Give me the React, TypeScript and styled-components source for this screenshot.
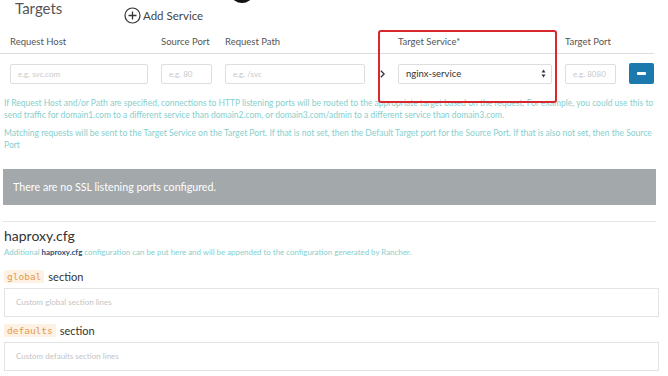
import styled, { createGlobalStyle } from 'styled-components'

const GlobalStyle = createGlobalStyle`
  html, body {
    margin: 0;
    padding: 0;
    background: #fff;
    font-family: Lato, 'Open Sans', sans-serif;
    color: #444;
  }
`

const Page = styled.div`
  position: relative;
  width: 668px;
  height: 376px;
  overflow: hidden;
`

const Blob = styled.div`
  position: absolute;
  left: 232px;
  top: -12px;
  width: 20px;
  height: 15px;
  border-radius: 50%;
  background: #111;
`

const TopBar = styled.div`
  display: flex;
  align-items: flex-start;
  height: 30px;
`

const SectionTitle = styled.div`
  font-size: 15px;
  color: #555;
  padding: 0 0 0 15px;
  line-height: 16px;
  width: 109px;
`

const AddService = styled.div`
  display: flex;
  align-items: center;
  gap: 2px;
  margin-top: 7px;
  font-size: 11.5px;
  color: #444;
`

const Table = styled.div`
  position: relative;
  display: grid;
  grid-template-columns: 138px 51px 140px 7px 154px 51px 25px;
  column-gap: 13px;
  padding: 0 14px 0 10px;
  align-items: center;
`

const HeadCell = styled.div`
  font-size: 9.5px;
  color: #555;
  height: 23px;
  line-height: 24px;
  white-space: nowrap;
`

const HeadRule = styled.div`
  grid-column: 1 / -1;
  margin-left: -10px;
  border-top: 1px solid #dcdcdc;
`

const Field = styled.div`
  margin-top: 9px;
  height: 20px;
  border: 1px solid #dedede;
  border-radius: 2px;
  box-sizing: border-box;
  font-size: 8px;
  color: #c9c9c9;
  padding-left: 7px;
  line-height: 18px;
  background: #fff;
  white-space: nowrap;
  overflow: hidden;
`

const Select = styled(Field)`
  display: flex;
  justify-content: space-between;
  align-items: center;
  color: #333;
  font-size: 9.5px;
  padding: 0 5px 0 7px;
`

const Chevron = styled.div`
  margin-top: 9px;
  height: 20px;
  display: flex;
  align-items: center;
  padding-left: 2px;
`

const RemoveButton = styled.div`
  margin-top: 9px;
  width: 25px;
  height: 21px;
  border-radius: 2px;
  background: #1b79ad;
  display: flex;
  align-items: center;
  justify-content: center;
`

const Dash = styled.div`
  width: 9px;
  height: 3px;
  border-radius: 1px;
  background: #fff;
`

const Highlight = styled.div`
  position: absolute;
  left: 378px;
  top: 0;
  width: 179px;
  height: 73px;
  border: 2px solid #d8272d;
  border-radius: 3px;
  box-sizing: border-box;
  pointer-events: none;
`

const Help = styled.p`
  margin: 0;
  padding: 0 10px 0 4px;
  font-size: 8.5px;
  line-height: 12px;
  color: #86cfcd;
`

const HelpGroup = styled.div`
  display: flex;
  flex-direction: column;
  gap: 6px;
  margin-top: 13px;
`

const Notice = styled.div`
  margin: 18px 12px 0 3px;
  height: 36px;
  background: #a3a8aa;
  color: #fff;
  font-size: 10.7px;
  line-height: 36px;
  padding-left: 10px;
`

const Rule = styled.div`
  margin: 16px 12px 0 3px;
  border-top: 1px solid #e4e4e4;
`

const CfgTitle = styled.div`
  margin: 6px 0 0 4px;
  font-size: 14px;
  color: #333;
  line-height: 16px;
`

const CfgNote = styled.div`
  margin: 2px 0 0 4px;
  font-size: 7.9px;
  color: #86cfcd;
  line-height: 12px;
  b {
    color: #1d4f7a;
    font-weight: 700;
  }
`

const SectionLabel = styled.div<{ $top: number }>`
  display: flex;
  align-items: center;
  gap: 4px;
  margin: ${({ $top }) => $top}px 0 0 4px;
  font-size: 11px;
  color: #333;
  height: 16px;
`

const Code = styled.code`
  font-family: 'DejaVu Sans Mono', 'Liberation Mono', monospace;
  font-size: 9.5px;
  color: #e39a4f;
  background: #fdf1e3;
  padding: 1px 3px;
  border-radius: 2px;
`

const Area = styled.div`
  margin: 4px 9px 0 4px;
  height: 29px;
  border: 1px solid #e3e3e3;
  box-sizing: border-box;
  font-size: 8px;
  color: #c4c4c4;
  line-height: 27px;
  padding-left: 11px;
`

const PlusIcon = () => (
  <svg width='17' height='17' viewBox='0 0 17 17' fill='none'>
    <circle cx='8.5' cy='8.5' r='7.5' stroke='#333' strokeWidth='1.2' />
    <path d='M8.5 4.5v8M4.5 8.5h8' stroke='#333' strokeWidth='1.3' />
  </svg>
)

const SortIcon = () => (
  <svg width='5' height='9' viewBox='0 0 5 9'>
    <path d='M2.5 0.5L4.5 3.5H0.5Z' fill='#333' />
    <path d='M2.5 8.5L4.5 5.5H0.5Z' fill='#333' />
  </svg>
)

const ChevronIcon = () => (
  <svg width='6' height='10' viewBox='0 0 6 10' fill='none'>
    <path d='M1 1l4 4-4 4' stroke='#333' strokeWidth='1.6' />
  </svg>
)

export default function App () {
  return (
    <Page>
      <GlobalStyle />
      <Blob />
      <TopBar>
        <SectionTitle>Targets</SectionTitle>
        <AddService>
          <PlusIcon />
          Add Service
        </AddService>
      </TopBar>
      <Table>
        <HeadCell>Request Host</HeadCell>
        <HeadCell>Source Port</HeadCell>
        <HeadCell>Request Path</HeadCell>
        <HeadCell />
        <HeadCell>Target Service*</HeadCell>
        <HeadCell>Target Port</HeadCell>
        <HeadCell />
        <HeadRule />
        <Field>e.g. svc.com</Field>
        <Field>e.g. 80</Field>
        <Field>e.g. /svc</Field>
        <Chevron><ChevronIcon /></Chevron>
        <Select>nginx-service<SortIcon /></Select>
        <Field>e.g. 8080</Field>
        <RemoveButton><Dash /></RemoveButton>
        <Highlight />
      </Table>
      <HelpGroup>
        <Help>
          If Request Host and/or Path are specified, connections to HTTP listening ports will be routed to the appropriate target based on the request. For example, you could use this to send traffic for domain1.com to a different service than domain2.com, or domain3.com/admin to a different service than domain3.com.
        </Help>
        <Help>
          Matching requests will be sent to the Target Service on the Target Port. If that is not set, then the Default Target port for the Source Port. If that is also not set, then the Source Port
        </Help>
      </HelpGroup>
      <Notice>There are no SSL listening ports configured.</Notice>
      <Rule />
      <CfgTitle>haproxy.cfg</CfgTitle>
      <CfgNote>
        Additional <b>haproxy.cfg</b> configuration can be put here and will be appended to the configuration generated by Rancher.
      </CfgNote>
      <SectionLabel $top={10}><Code>global</Code>section</SectionLabel>
      <Area>Custom global section lines</Area>
      <SectionLabel $top={5}><Code>defaults</Code>section</SectionLabel>
      <Area>Custom defaults section lines</Area>
    </Page>
  )
}
